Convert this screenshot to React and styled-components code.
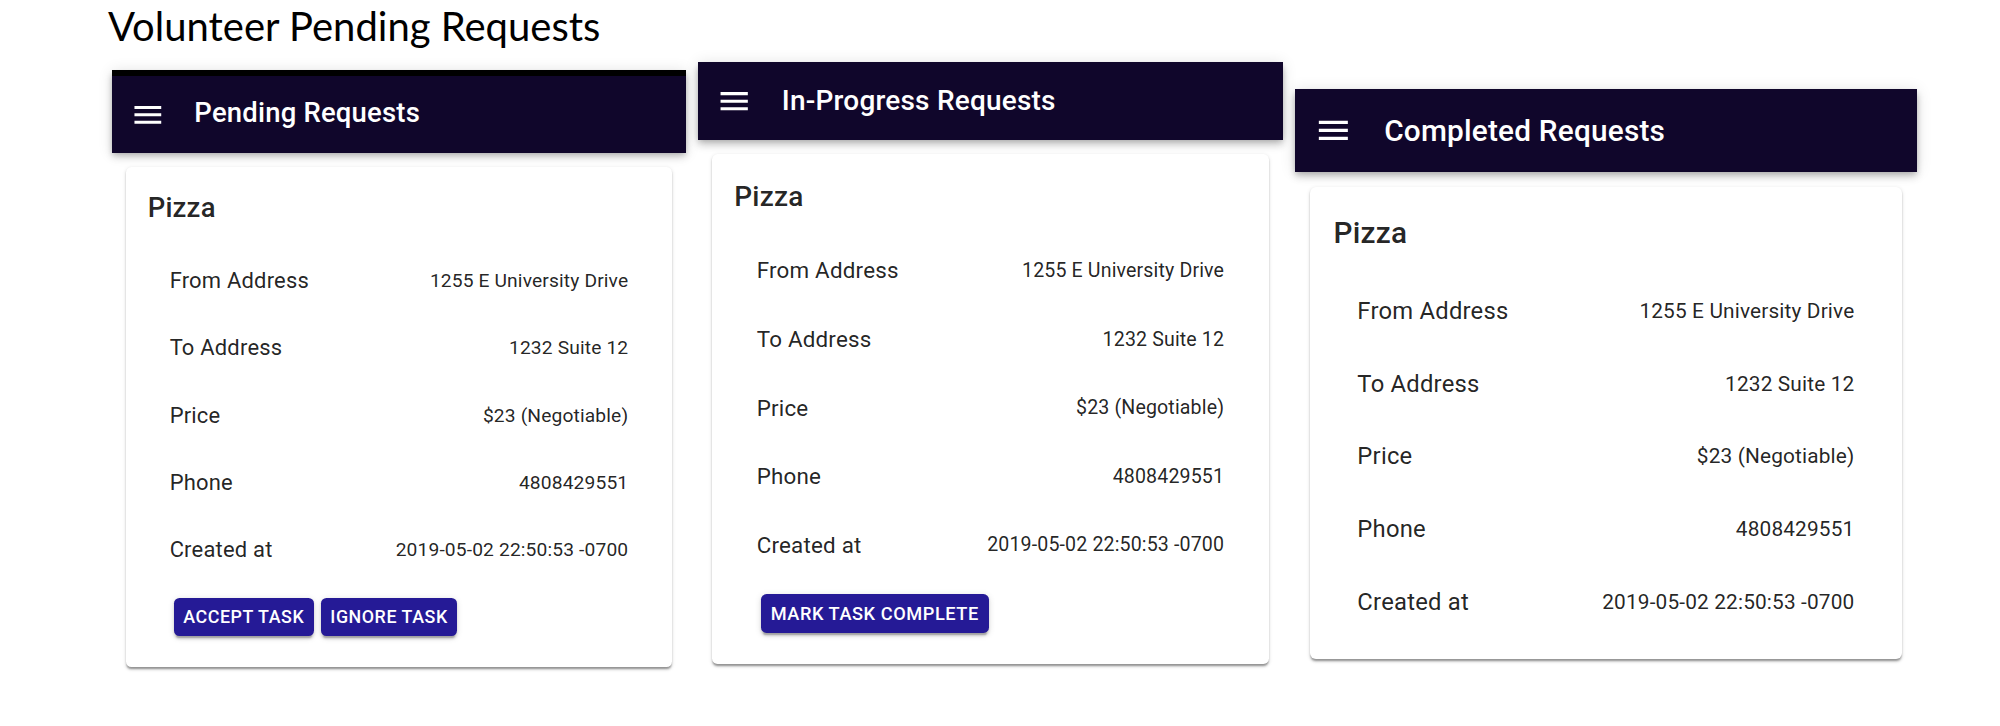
import React from 'react';
import styled, { createGlobalStyle } from 'styled-components';

const GlobalStyle = createGlobalStyle`
  html, body { margin: 0; padding: 0; background: #fff; }
  body { font-family: Roboto, "Liberation Sans", sans-serif; }
`;

const Page = styled.div`
  width: 2000px;
  height: 726px;
  background: #fff;
  overflow: hidden;
`;

const DocTitle = styled.h1`
  margin: 0;
  padding: 3px 0 0 108px;
  font-family: Lato, "Open Sans", sans-serif;
  font-weight: 400;
  font-size: 40px;
  line-height: 47px;
  color: #000;
`;

const Screens = styled.div`
  display: flex;
  align-items: flex-start;
  gap: 12px;
  padding-left: 112px;
  margin-top: 12px;
`;

const Slot = styled.div`
  margin-top: ${p => p.$offset}px;
`;

const Phone = styled.section`
  zoom: ${p => p.$zoom};
  width: 418px;
  font-family: Roboto, "Liberation Sans", sans-serif;
`;

const AppBar = styled.header`
  height: 56px;
  display: flex;
  align-items: center;
  background: #10062b;
  color: #fff;
  border-top: ${p => (p.$stripe ? '5px solid #000' : '0 none')};
  box-shadow: 0 2px 4px -1px rgba(0, 0, 0, 0.2), 0 4px 5px 0 rgba(0, 0, 0, 0.14),
    0 1px 10px 0 rgba(0, 0, 0, 0.12);
  position: relative;
  z-index: 1;
`;

const MenuIcon = styled.svg`
  width: 26px;
  height: 26px;
  margin: 0 21px 0 13px;
  flex: none;
  fill: #fff;
`;

const BarTitle = styled.h2`
  margin: 0;
  font-size: 20px;
  font-weight: 500;
  letter-spacing: 0.15px;
  line-height: 32px;
`;

const Card = styled.article`
  margin: 10px 10px 0;
  background: #fff;
  border-radius: 4px;
  padding: 14.5px 16px 13.5px;
  box-shadow: 0 2px 2px -1px rgba(0, 0, 0, 0.28), 0 1px 1px 0 rgba(0, 0, 0, 0.14),
    0 1px 3px 0 rgba(0, 0, 0, 0.12);
`;

const CardTitle = styled.h3`
  margin: 0;
  font-size: 20px;
  font-weight: 500;
  line-height: 32px;
  letter-spacing: 0.15px;
  color: rgba(0, 0, 0, 0.87);
`;

const List = styled.ul`
  margin: 0;
  padding: 12px 0 0;
  list-style: none;
`;

const Row = styled.li`
  height: 49px;
  display: flex;
  align-items: center;
  justify-content: space-between;
  padding: 0 16px;
  color: rgba(0, 0, 0, 0.87);
`;

const Label = styled.span`
  font-size: 16px;
  letter-spacing: 0.15px;
`;

const Value = styled.span`
  font-size: 14px;
  letter-spacing: 0.1px;
`;

const Actions = styled.div`
  display: flex;
  gap: 5px;
  padding: 10.5px 0 9px 19px;
`;

const TaskButton = styled.button`
  height: 28px;
  padding: 0 7px;
  border: 0;
  border-radius: 4px;
  background: #251a96;
  color: #fff;
  font-family: Roboto, "Liberation Sans", sans-serif;
  font-size: 13px;
  font-weight: 500;
  letter-spacing: 0.4px;
  text-transform: uppercase;
  box-shadow: 0 3px 1px -2px rgba(0, 0, 0, 0.2), 0 2px 2px 0 rgba(0, 0, 0, 0.14),
    0 1px 5px 0 rgba(0, 0, 0, 0.12);
  cursor: pointer;
`;

const details = [
  ['From Address', '1255 E University Drive'],
  ['To Address', '1232 Suite 12'],
  ['Price', '$23 (Negotiable)'],
  ['Phone', '4808429551'],
  ['Created at', '2019-05-02 22:50:53 -0700'],
];

const screens = [
  { title: 'Pending Requests', zoom: 1.373, offset: 8, stripe: true, actions: ['Accept Task', 'Ignore Task'] },
  { title: 'In-Progress Requests', zoom: 1.3995, offset: 0, stripe: false, actions: ['Mark Task Complete'] },
  { title: 'Completed Requests', zoom: 1.488, offset: 27, stripe: false, actions: [] },
];

function Menu() {
  return (
    <MenuIcon viewBox="0 0 24 24" aria-hidden="true">
      <path d="M3 18h18v-2H3v2zm0-5h18v-2H3v2zm0-7v2h18V6H3z" />
    </MenuIcon>
  );
}

function Screen({ title, zoom, offset, stripe, actions }) {
  return (
    <Slot $offset={offset}>
      <Phone $zoom={zoom}>
        <AppBar $stripe={stripe}>
          <Menu />
          <BarTitle>{title}</BarTitle>
        </AppBar>
        <Card>
          <CardTitle>Pizza</CardTitle>
          <List>
            {details.map(([k, v]) => (
              <Row key={k}>
                <Label>{k}</Label>
                <Value>{v}</Value>
              </Row>
            ))}
          </List>
          {actions.length > 0 && (
            <Actions>
              {actions.map(a => (
                <TaskButton key={a}>{a}</TaskButton>
              ))}
            </Actions>
          )}
        </Card>
      </Phone>
    </Slot>
  );
}

export default function App() {
  return (
    <Page>
      <GlobalStyle />
      <DocTitle>Volunteer Pending Requests</DocTitle>
      <Screens>
        {screens.map(s => (
          <Screen key={s.title} {...s} />
        ))}
      </Screens>
    </Page>
  );
}
